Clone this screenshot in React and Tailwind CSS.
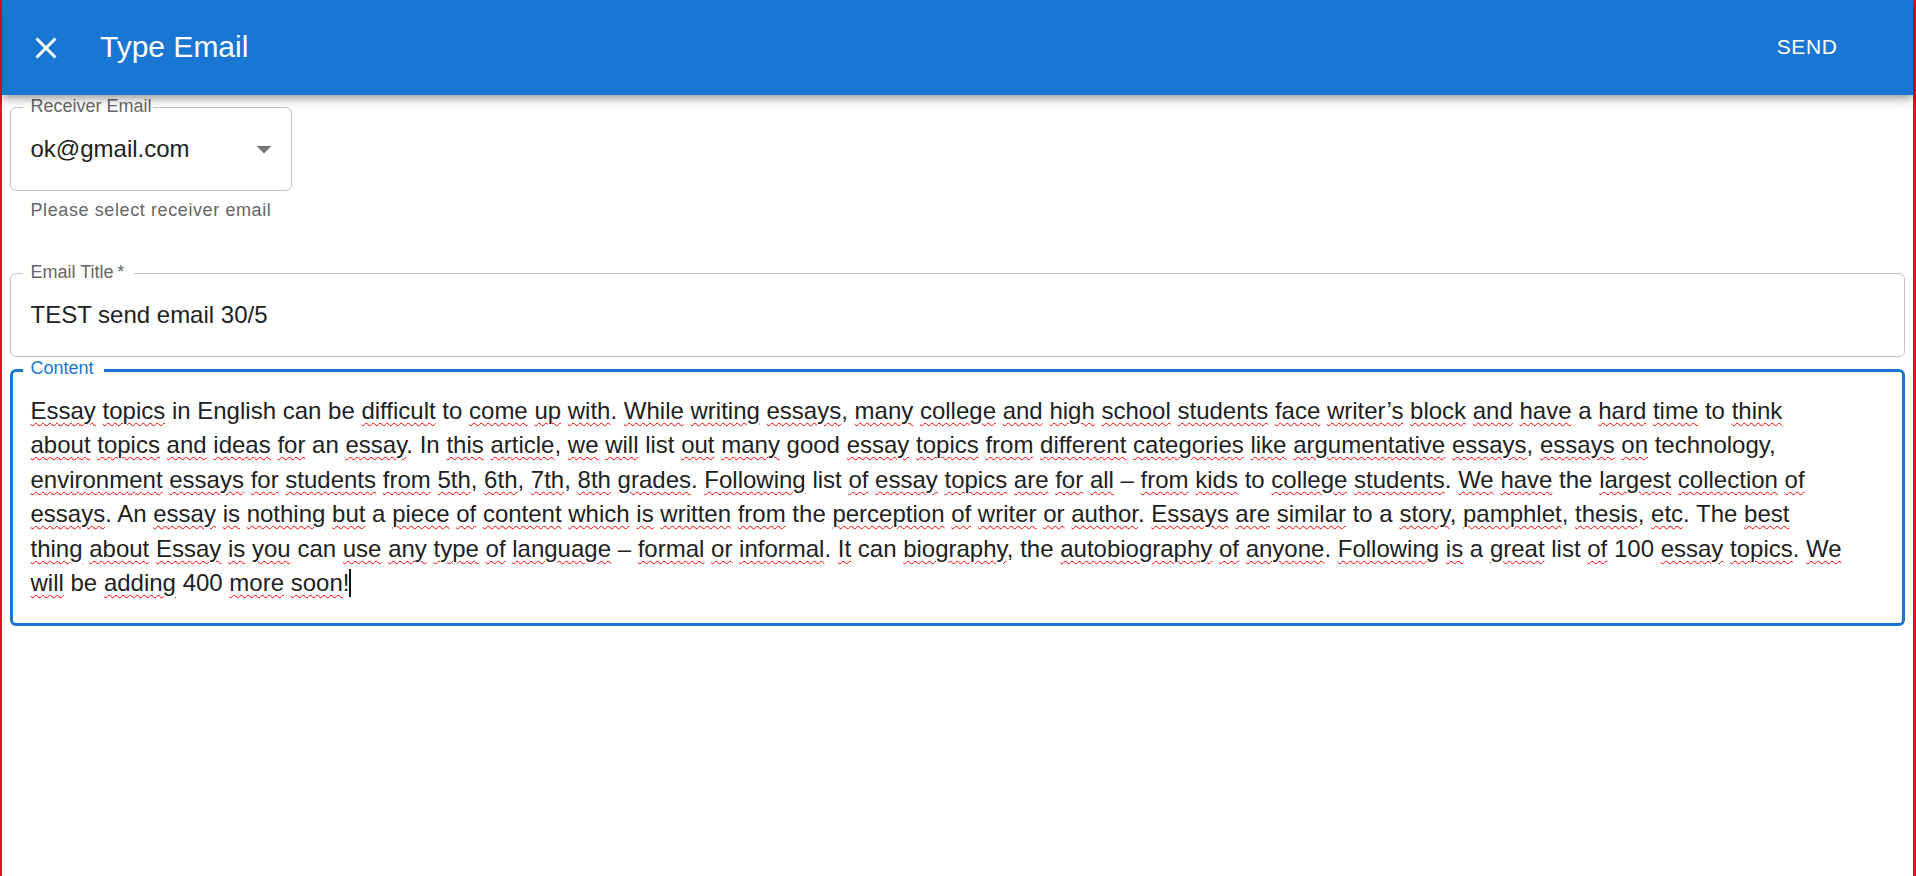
import React from 'react';

// words the spell checker leaves alone; everything else gets the red squiggle
const OK_WORDS = new Set(['in', 'English', 'can', 'be', 'to', 'a', 'an', 'An', 'In', 'list', 'good', 'the', 'The', 'technology']);

const LINES = [
  'Essay topics in English can be difficult to come up with. While writing essays, many college and high school students face writer’s block and have a hard time to think',
  'about topics and ideas for an essay. In this article, we will list out many good essay topics from different categories like argumentative essays, essays on technology,',
  'environment essays for students from 5th, 6th, 7th, 8th grades. Following list of essay topics are for all – from kids to college students. We have the largest collection of',
  'essays. An essay is nothing but a piece of content which is written from the perception of writer or author. Essays are similar to a story, pamphlet, thesis, etc. The best',
  'thing about Essay is you can use any type of language – formal or informal. It can biography, the autobiography of anyone. Following is a great list of 100 essay topics. We',
  'will be adding 400 more soon!',
];

function Line({ text, last }) {
  const parts = text.split(/([A-Za-z0-9’]+)/);
  return (
    <div className="whitespace-pre">
      {parts.map((p, i) => {
        const isWord = /^[A-Za-z0-9’]+$/.test(p);
        if (!isWord || OK_WORDS.has(p) || /^\d+$/.test(p)) return <span key={i}>{p}</span>;
        return (
          <span key={i} className="underline decoration-wavy decoration-[#f00] decoration-1 underline-offset-[3px]">
            {p}
          </span>
        );
      })}
      {last && <span className="inline-block w-[2px] h-[28px] bg-[#111] align-[-6px]" />}
    </div>
  );
}

function CloseIcon() {
  return (
    <svg className="w-[36px] h-[36px]" viewBox="0 0 24 24" fill="currentColor">
      <path d="M19 6.41 17.59 5 12 10.59 6.41 5 5 6.41 10.59 12 5 17.59 6.41 19 12 13.41 17.59 19 19 17.59 13.41 12z" />
    </svg>
  );
}

function ArrowDrop() {
  return (
    <svg className="w-[36px] h-[36px] text-[#757575]" viewBox="0 0 24 24" fill="currentColor">
      <path d="M7 10l5 5 5-5z" />
    </svg>
  );
}

export default function App() {
  return (
    <div className="min-h-screen bg-white border-l-2 border-r-[3px] border-[#e81123] font-['Liberation_Sans',Arial,sans-serif]">
      {/* app bar */}
      <header className="relative z-10 h-[95px] bg-[#1976d2] text-white flex items-center shadow-[0_3px_6px_-1.5px_rgba(0,0,0,0.2),0_6px_7.5px_0_rgba(0,0,0,0.14),0_1.5px_15px_0_rgba(0,0,0,0.12)]">
        <button className="ml-[25.5px] flex items-center justify-center">
          <CloseIcon />
        </button>
        <h1 className="ml-[36.5px] mb-[2px] text-[30px] leading-[48px] font-normal">Type Email</h1>
        <div className="flex-1" />
        <button className="mr-[75.5px] mb-[2px] text-[21px] leading-[36px] tracking-[0.6px] uppercase">Send</button>
      </header>

      <div className="pl-[7.5px] pr-[8.5px] pt-[12px]">
        {/* receiver select */}
        <div className="relative w-[282.5px] h-[84px] border border-[#c4c4c4] rounded-[6px] flex items-center pl-[20px] pr-[9.5px]">
          <span className="absolute left-[12px] top-[-11px] pl-[8px] pr-[1px] bg-white text-[18px] leading-[18px] text-[#666]">
            Receiver Email
          </span>
          <span className="flex-1 text-[24px] leading-[34.5px] text-[#212121]">ok@gmail.com</span>
          <ArrowDrop />
        </div>
        <p className="mt-[4px] ml-[21px] text-[18px] leading-[30px] tracking-[0.6px] text-[#666]">Please select receiver email</p>

        {/* title */}
        <div className="relative mt-[48px] h-[84px] border border-[#c4c4c4] rounded-[6px] flex items-center pl-[20px]">
          <span className="absolute left-[12px] top-[-11px] pl-[8px] pr-[10px] bg-white text-[18px] leading-[18px] text-[#666]">
            Email Title{'\u2009'}*
          </span>
          <span className="text-[24px] leading-[34.5px] text-[#212121]">TEST send email 30/5</span>
        </div>

        {/* content */}
        <div className="relative mt-[12px] border-[3px] border-[#1976d2] rounded-[6px] px-[18px] py-[21.75px]">
          <span className="absolute left-[10px] top-[-13px] pl-[8px] pr-[10px] bg-white text-[18px] leading-[18px] text-[#1976d2]">
            Content
          </span>
          <div className="text-[24px] leading-[34.5px] text-[#212121]">
            {LINES.map((l, i) => (
              <Line key={i} text={l} last={i === LINES.length - 1} />
            ))}
          </div>
        </div>
      </div>
    </div>
  );
}
